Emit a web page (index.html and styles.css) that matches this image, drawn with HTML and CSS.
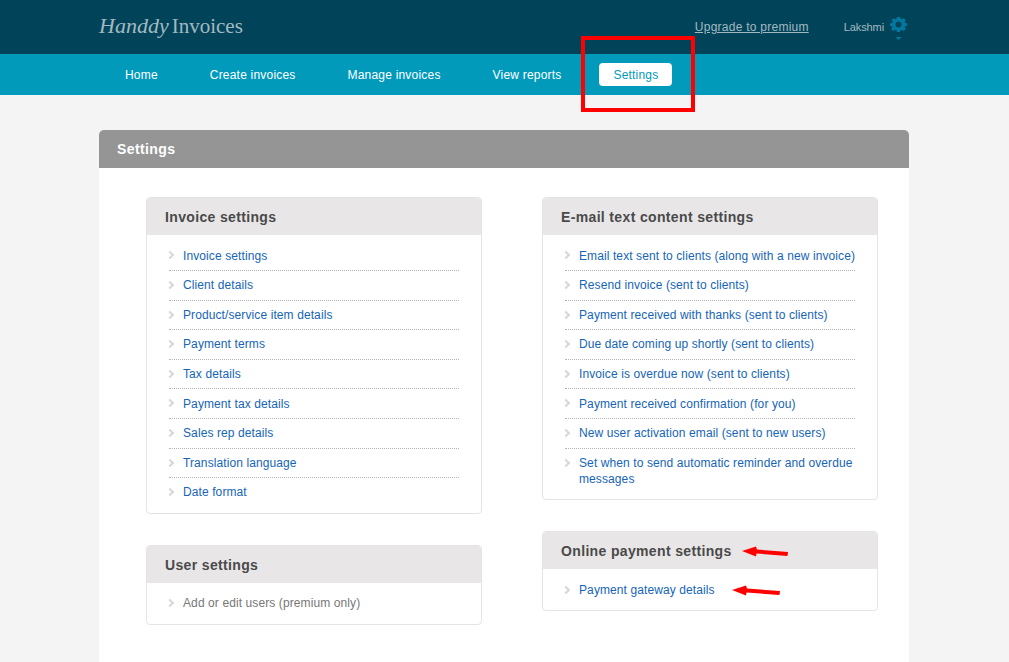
FILE: index.html
```html
<!DOCTYPE html>
<html lang="en">
<head>
<meta charset="utf-8">
<title>Settings - Handdy Invoices</title>
<link rel="stylesheet" href="styles.css">
</head>
<body>
<header class="top">
  <div class="wrap top-in">
    <a class="logo"><span class="logo-script">Handdy</span> <span class="logo-serif">Invoices</span></a>
    <div class="top-right">
      <a class="upgrade">Upgrade to premium</a>
      <span class="user">Lakshmi</span>
      <span class="gear">
        <svg width="17" height="23" viewBox="0 0 17 23">
          <g fill="#01789f">
            <path d="M7 1h3l.4 2.200 1.500.6L13.800 2.500l2.100 2.100-1.300 1.900.6 1.500 2.200.4v3l-2.200.4-.6 1.500 1.300 1.900-2.100 2.100-1.900-1.300-1.500.6-.4 1.900H7l-.4-1.900-1.500-.6-1.900 1.300-2.100-2.100 1.300-1.900-.6-1.500L0 11.500v-3l2.200-.4.6-1.500L1.500 4.600l2.100-2.100 1.900 1.300 1.100-.6z" transform="translate(0 -1) scale(1 .86)"/>
            <path d="M5.500 20h6l-3 3z"/>
          </g>
          <circle cx="8.500" cy="7.600" r="3" fill="#014459"/>
        </svg>
      </span>
    </div>
  </div>
</header>
<nav class="nav">
  <div class="wrap nav-in">
    <a class="nav-link">Home</a>
    <a class="nav-link">Create invoices</a>
    <a class="nav-link">Manage invoices</a>
    <a class="nav-link">View reports</a>
    <a class="nav-link active">Settings</a>
  </div>
</nav>
<main class="wrap card">
  <h1 class="card-head">Settings</h1>
  <div class="grid">
    <div class="col">
      <section class="box">
        <h2 class="box-head">Invoice settings</h2>
        <ul class="list">
          <li><a>Invoice settings</a></li>
          <li><a>Client details</a></li>
          <li><a>Product/service item details</a></li>
          <li><a>Payment terms</a></li>
          <li><a>Tax details</a></li>
          <li><a>Payment tax details</a></li>
          <li><a>Sales rep details</a></li>
          <li><a>Translation language</a></li>
          <li><a>Date format</a></li>
        </ul>
      </section>
      <section class="box">
        <h2 class="box-head">User settings</h2>
        <ul class="list">
          <li class="off">Add or edit users (premium only)</li>
        </ul>
      </section>
    </div>
    <div class="col">
      <section class="box">
        <h2 class="box-head">E-mail text content settings</h2>
        <ul class="list">
          <li class="single"><a>Email text sent to clients (along with a new invoice)</a></li>
          <li><a>Resend invoice (sent to clients)</a></li>
          <li><a>Payment received with thanks (sent to clients)</a></li>
          <li><a>Due date coming up shortly (sent to clients)</a></li>
          <li><a>Invoice is overdue now (sent to clients)</a></li>
          <li><a>Payment received confirmation (for you)</a></li>
          <li><a>New user activation email (sent to new users)</a></li>
          <li><a>Set when to send automatic reminder and overdue messages</a></li>
        </ul>
      </section>
      <section class="box">
        <h2 class="box-head">Online payment settings</h2>
        <ul class="list">
          <li><a>Payment gateway details</a></li>
        </ul>
      </section>
    </div>
  </div>
</main>
<div class="mark-rect"></div>
<svg class="mark-arrows" width="1009" height="662" viewBox="0 0 1009 662">
  <path d="M742 551l14-4.500 1 3 31 2.500-.5 4-31-2.500-.5 3z" fill="#f00"/>
  <path d="M732 590l14-4.500 1 3 33 2.500-.5 4-33-2.500-.5 3z" fill="#f00"/>
</svg>
</body>
</html>
```

FILE: styles.css
```css
* { box-sizing: border-box; }
html, body { margin: 0; height: 662px; overflow: hidden; }
body {
  background: #f4f4f4;
  font-family: "Liberation Sans", Arial, sans-serif;
  font-size: 12px;
  letter-spacing: 0.1px;
  position: relative;
}
.wrap { width: 810px; margin-left: 99px; }
.top { height: 54px; background: #014459; }
.top-in { display: flex; justify-content: space-between; align-items: flex-start; }
.logo { color: #a3b9c1; line-height: 52px; letter-spacing: 0; white-space: nowrap; font-family: "Liberation Serif", serif; }
.logo-script { font-size: 22px; font-style: italic; }
.logo-serif { font-size: 21px; }
.top-right { display: flex; align-items: flex-start; padding-right: 2px; }
.upgrade { color: #a3b9c1; text-decoration: underline; line-height: 16px; margin-top: 19px; margin-right: 35px; letter-spacing: 0.25px; }
.user { color: #a3b9c1; font-size: 11px; line-height: 16px; margin-top: 19px; margin-right: 6px; letter-spacing: -0.1px; }
.gear { display: block; margin-top: 17px; height: 23px; }
.gear svg { display: block; }
.nav { height: 41px; background: #029abb; }
.nav-in { display: flex; gap: 24px; padding-left: 12px; padding-top: 9px; }
.nav-link { display: block; color: #fff; line-height: 24px; height: 23px; padding: 0 14px; border-radius: 4px; letter-spacing: 0.2px; }
.active { background: #fff; color: #029abb; }
.card { background: #fff; margin-top: 35px; height: 532px; border-radius: 5px 5px 0 0; }
.card-head {
  margin: 0; height: 38px; background: #959595; color: #fff;
  font-size: 14px; line-height: 38px; padding-left: 18px;
  border-radius: 5px 5px 0 0; letter-spacing: 0.4px;
}
.grid { display: grid; grid-template-columns: 336px 336px; column-gap: 60px; padding: 29px 0 0 47px; align-items: start; }
.col { display: flex; flex-direction: column; gap: 31px; }
.box { border: 1px solid #e4e4e4; border-radius: 4px; background: #fff; overflow: hidden; }
.box-head {
  margin: -1px -1px 0; height: 38px; background: #e8e6e7; color: #4a4a4a;
  font-size: 14px; line-height: 40px; padding-left: 19px; letter-spacing: 0.35px;
}
.list { list-style: none; margin: 0; padding: 6.4px 22px 6px; }
.list li {
  padding: 6.3px 0 6.3px 14px; line-height: 16px;
  border-bottom: 1px dotted #b5b5b5; position: relative;
  color: #1565b8;
}
.list li:last-child { border-bottom: 0; }
.list li.single { white-space: nowrap; }
.list li::before {
  content: ""; position: absolute; left: -2px; top: 11px;
  width: 4px; height: 4px; border-top: 2px solid #d8d8d8; border-right: 2px solid #d8d8d8;
  transform: rotate(45deg);
}
.list li.off { color: #777; }
.mark-rect {
  position: absolute; left: 581px; top: 36px; width: 114px; height: 76px;
  border: 4px solid #f00;
}
.mark-arrows { position: absolute; left: 0; top: 0; pointer-events: none; }
```
